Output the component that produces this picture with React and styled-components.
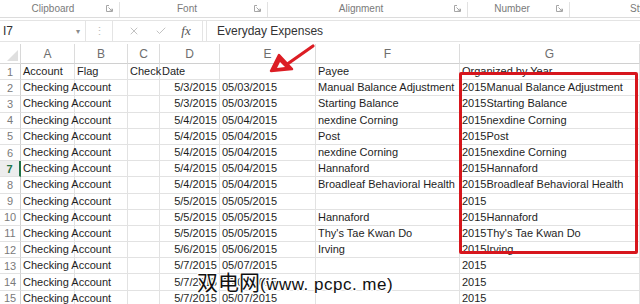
import React from "react";
import styled, { createGlobalStyle } from "styled-components";
import { X, Check } from "lucide-react";

const GlobalStyle = createGlobalStyle`
    html, body {
        margin: 0;
        padding: 0;
        background: #ffffff;
    }
    * {
        box-sizing: border-box;
    }
`;

const GROUPS = [
    { label: "Clipboard", width: 120 },
    { label: "Font", width: 148 },
    { label: "Alignment", width: 200 },
    { label: "Number", width: 102 },
    { label: "Styles", width: 70, open: true },
];

const COLUMNS = [
    { name: "A", width: 54 },
    { name: "B", width: 53 },
    { name: "C", width: 32 },
    { name: "D", width: 60 },
    { name: "E", width: 96 },
    { name: "F", width: 144 },
    { name: "G", width: 180 },
];

const ROWS = [
    ["Account", "Flag", "Check", "Date", "", "Payee", "Organized by Year"],
    ["Checking Account", "", "", "5/3/2015", "05/03/2015", "Manual Balance Adjustment", "2015Manual Balance Adjustment"],
    ["Checking Account", "", "", "5/3/2015", "05/03/2015", "Starting Balance", "2015Starting Balance"],
    ["Checking Account", "", "", "5/4/2015", "05/04/2015", "nexdine Corning", "2015nexdine Corning"],
    ["Checking Account", "", "", "5/4/2015", "05/04/2015", "Post", "2015Post"],
    ["Checking Account", "", "", "5/4/2015", "05/04/2015", "nexdine Corning", "2015nexdine Corning"],
    ["Checking Account", "", "", "5/4/2015", "05/04/2015", "Hannaford", "2015Hannaford"],
    ["Checking Account", "", "", "5/4/2015", "05/04/2015", "Broadleaf Behavioral Health", "2015Broadleaf Behavioral Health"],
    ["Checking Account", "", "", "5/5/2015", "05/05/2015", "", "2015"],
    ["Checking Account", "", "", "5/5/2015", "05/05/2015", "Hannaford", "2015Hannaford"],
    ["Checking Account", "", "", "5/5/2015", "05/05/2015", "Thy's Tae Kwan Do", "2015Thy's Tae Kwan Do"],
    ["Checking Account", "", "", "5/6/2015", "05/06/2015", "Irving", "2015Irving"],
    ["Checking Account", "", "", "5/7/2015", "05/07/2015", "", "2015"],
    ["Checking Account", "", "", "5/7/2015", "05/07/2015", "", "2015"],
    ["Checking Account", "", "", "5/7/2015", "05/07/2015", "", "2015"],
];

const ACTIVE_ROW = 7;

function Launcher() {
    return (
        <svg width="7" height="7" viewBox="0 0 7 7">
            <path d="M0.5 0.5 H3 M0.5 0.5 V6.5 H6.5 V4" stroke="#a6a6a6" strokeWidth="1" fill="none" />
            <path d="M2.5 2.5 L6 6 M6 3.5 V6 H3.5" stroke="#a6a6a6" strokeWidth="1" fill="none" />
        </svg>
    );
}

function Arrow() {
    return (
        <ArrowSvg width="70" height="42" viewBox="0 0 70 42">
            <path d="M58 7 L31 26" stroke="#dc1d24" strokeWidth="3.2" strokeLinecap="round" />
            <polygon points="16,32 24,16 37,30" fill="#dc1d24" stroke="#dc1d24" strokeWidth="2.5" strokeLinejoin="round" />
            <polygon points="22,29 25,23 30,28" fill="#ffffff" />
        </ArrowSvg>
    );
}

function App() {
    const template = `21px ${COLUMNS.map((c) => c.width + "px").join(" ")}`;

    return (
        <Page>
            <GlobalStyle />
            <Ribbon>
                {GROUPS.map((g) => (
                    <RibbonGroup key={g.label} $width={g.width} $open={g.open}>
                        <GroupLabel $open={g.open}>{g.label}</GroupLabel>
                        {!g.open && <Launcher />}
                    </RibbonGroup>
                ))}
            </Ribbon>

            <FormulaBar>
                <NameBox>
                    I7
                    <Caret>▾</Caret>
                </NameBox>
                <Grip>⋮</Grip>
                <FormulaButtons>
                    <X size={12} strokeWidth={1.3} color="#a0a0a0" />
                    <Check size={12} strokeWidth={1.3} color="#a0a0a0" />
                    <Fx>fx</Fx>
                </FormulaButtons>
                <FormulaInput>Everyday Expenses</FormulaInput>
            </FormulaBar>

            <Sheet style={{ gridTemplateColumns: template }}>
                <Corner>
                    <CornerMark />
                </Corner>
                {COLUMNS.map((c) => (
                    <ColHeader key={c.name}>{c.name}</ColHeader>
                ))}
                {ROWS.map((row, i) => (
                    <React.Fragment key={i}>
                        <RowHeader $active={i + 1 === ACTIVE_ROW}>{i + 1}</RowHeader>
                        {row.map((value, j) => (
                            <Cell
                                key={j}
                                $right={j === 3 && i > 0}
                                $spill={j === 0 || j === 2 || j === 6}
                            >
                                {value}
                            </Cell>
                        ))}
                    </React.Fragment>
                ))}
            </Sheet>

            <Highlight />
            <Arrow />
            <Watermark>
                双电网<Latin>(www. pcpc. me)</Latin>
            </Watermark>
        </Page>
    );
}

const Page = styled.div`
    position: relative;
    width: 640px;
    height: 304px;
    overflow: hidden;
    background: #ffffff;
    font-family: "Liberation Sans", Arial, sans-serif;
    color: #222222;
`

const Ribbon = styled.div`
    display: flex;
    height: 18px;
    border-bottom: 1px solid #dcdcdc;
`

const RibbonGroup = styled.div`
    flex: 0 0 ${(p) => p.$width}px;
    display: flex;
    align-items: center;
    justify-content: space-between;
    padding: 0 6px 2px 0;
    border-right: ${(p) => (p.$open ? "none" : "1px solid #e2e2e2")};
    margin: 2px 0 0;
`

const GroupLabel = styled.span`
    flex: 1;
    text-align: ${(p) => (p.$open ? "left" : "center")};
    padding-left: ${(p) => (p.$open ? "60px" : "0")};
    font-size: 10px;
    color: #7a7a7a;
`

const FormulaBar = styled.div`
    display: flex;
    align-items: stretch;
    height: 22px;
    margin-top: 2px;
    border-top: 1px solid #e4e4e4;
    border-bottom: 1px solid #e4e4e4;
`

const NameBox = styled.div`
    width: 86px;
    display: flex;
    align-items: center;
    justify-content: space-between;
    padding: 0 5px 0 3px;
    font-size: 12px;
    color: #333333;
    border-right: 1px solid #e4e4e4;
`

const Caret = styled.span`
    font-size: 8px;
    color: #8a8a8a;
`

const Grip = styled.div`
    width: 26px;
    display: flex;
    align-items: center;
    justify-content: center;
    font-size: 11px;
    color: #bcbcbc;
`

const FormulaButtons = styled.div`
    width: 91px;
    display: flex;
    align-items: center;
    justify-content: space-around;
    padding: 0 4px 0 8px;
    border-left: 1px solid #e4e4e4;
    border-right: 1px solid #e4e4e4;
`

const Fx = styled.span`
    font-family: "Liberation Serif", "Times New Roman", serif;
    font-style: italic;
    font-size: 13px;
    color: #555555;
`

const FormulaInput = styled.div`
    flex: 1;
    display: flex;
    align-items: center;
    padding-left: 10px;
    margin-left: 3px;
    border-left: 1px solid #e4e4e4;
    font-size: 12px;
    color: #333333;
`

const Sheet = styled.div`
    display: grid;
    grid-template-rows: 20px;
    grid-auto-rows: 16.2px;
    margin-top: 2px;
`

const Corner = styled.div`
    position: relative;
    border-right: 1px solid #d8d8d8;
    border-bottom: 1px solid #d8d8d8;
`

const CornerMark = styled.div`
    position: absolute;
    right: 2px;
    bottom: 2px;
    width: 0;
    height: 0;
    border-left: 11px solid transparent;
    border-bottom: 11px solid #dfdfdf;
`

const ColHeader = styled.div`
    display: flex;
    align-items: center;
    justify-content: center;
    font-size: 12px;
    color: #6e6e6e;
    border-right: 1px solid #dcdcdc;
    border-bottom: 1px solid #d0d0d0;
`

const RowHeader = styled.div`
    display: flex;
    align-items: center;
    justify-content: center;
    font-size: 11px;
    font-weight: ${(p) => (p.$active ? "bold" : "normal")};
    color: ${(p) => (p.$active ? "#217346" : "#7a7a7a")};
    background: ${(p) => (p.$active ? "#ededed" : "#ffffff")};
    border-right: ${(p) => (p.$active ? "2px solid #217346" : "1px solid #d0d0d0")};
    border-bottom: 1px solid #e2e2e2;
`

const Cell = styled.div`
    display: flex;
    align-items: center;
    justify-content: ${(p) => (p.$right ? "flex-end" : "flex-start")};
    padding: 0 2px;
    font-size: 11px;
    line-height: 1;
    white-space: nowrap;
    overflow: ${(p) => (p.$spill ? "visible" : "hidden")};
    border-right: 1px solid #e2e2e2;
    border-bottom: 1px solid #e2e2e2;
    color: #1e1e1e;
`

const Highlight = styled.div`
    position: absolute;
    left: 459px;
    top: 72px;
    width: 179px;
    height: 182px;
    border: 3px solid #d7161d;
    border-radius: 2px;
`

const ArrowSvg = styled.svg`
    position: absolute;
    left: 255px;
    top: 39px;
`

const Watermark = styled.div`
    position: absolute;
    left: 197px;
    top: 268px;
    font-family: "Noto Sans CJK SC", sans-serif;
    font-size: 21px;
    line-height: 26px;
    color: #111111;
    white-space: nowrap;
    text-shadow: 1px 1px 0 #fff, -1px -1px 0 #fff, 1px -1px 0 #fff, -1px 1px 0 #fff;
`

const Latin = styled.span`
    font-family: "Liberation Sans", Arial, sans-serif;
    font-size: 17px;
    letter-spacing: 0.5px;
`

export default App;
